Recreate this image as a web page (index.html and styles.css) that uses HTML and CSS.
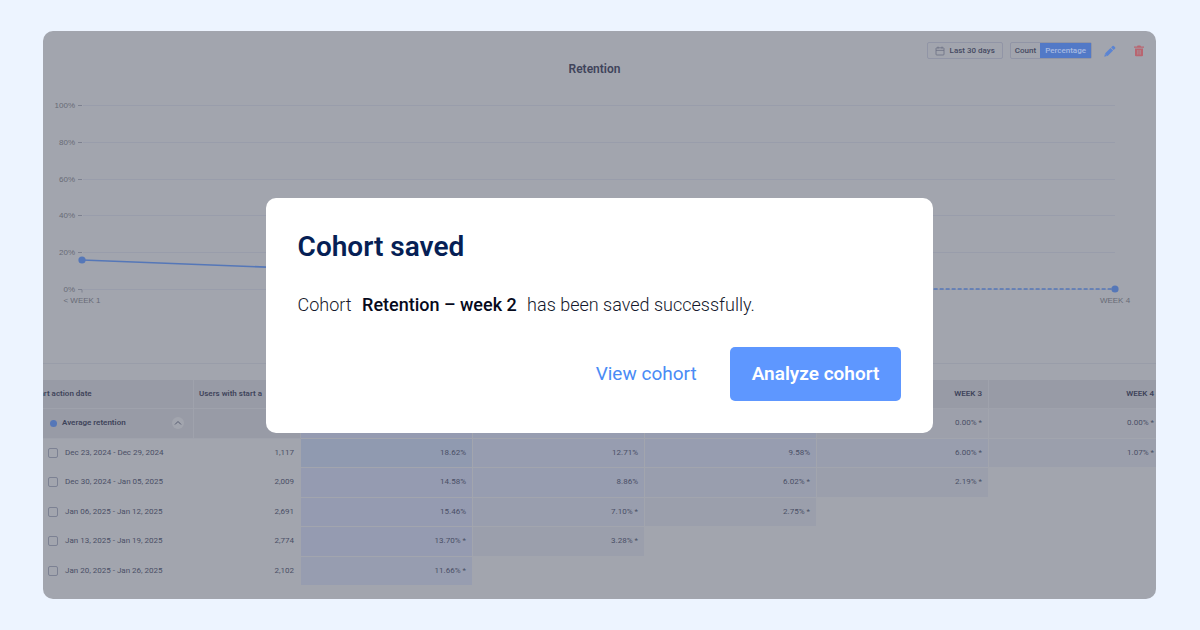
FILE: index.html
```html
<!DOCTYPE html>
<html lang="en">

<head>
    <meta charset="UTF-8" />
    <title>Retention</title>
    <link rel="stylesheet" href="styles.css">
</head>

<body>
    <main class="panel">
        <div class="toolbar">
            <button class="btn-date" type="button">
                <svg width="10" height="10" viewBox="0 0 10 10" fill="none" stroke="#6b7083" stroke-width="0.8">
                    <rect x="1" y="1.8" width="8" height="7.2" rx="0.8" />
                    <path d="M1 4.4h8M3 0.6v2M7 0.6v2" />
                </svg>
                Last 30 days
            </button>
            <div class="switch">
                <button type="button">Count</button>
                <button class="active" type="button">Percentage</button>
            </div>
            <button class="btn-icon" type="button" aria-label="Edit">
                <svg width="12" height="12" viewBox="0 0 12 12" fill="#5b84d2">
                    <path d="M0.3 11.7l0.6-2.6 2 2z" />
                    <path d="M1.3 8.2l5.2-5.2 2.6 2.6-5.2 5.2q-0.8 0.4-1.4-0.2l-1-1q-0.6-0.6-0.2-1.4z" />
                    <path d="M7.1 2.4l1.4-1.4q0.7-0.7 1.4 0l1.2 1.2q0.7 0.7 0 1.4l-1.4 1.4z" />
                </svg>
            </button>
            <button class="btn-icon" type="button" aria-label="Delete">
                <svg width="10" height="12" viewBox="0 0 10 12">
                    <path fill="#b96570" d="M0 1.4h3l0.6-0.9h2.8l0.6 0.9h3v1.3h-10z" />
                    <path fill="#b96570" d="M1 3.4h8v6.8q0 1.1-1.1 1.1h-5.8q-1.1 0-1.1-1.1z" />
                    <path stroke="#a2a5ae" stroke-width="0.5" d="M3.6 5v4.6M5 5v4.6M6.4 5v4.6" />
                </svg>
            </button>
        </div>
        <h1>Retention</h1>

        <svg class="chart" viewBox="0 0 1113 284">
            <g class="grid">
                <path d="M40 26.5H1072M40 63.5H1072M40 100.5H1072M40 136.5H1072M40 173.5H1072M40 210.5H1072" />
            </g>
            <g class="ticks">
                <path d="M35 26.5h4M35 63.5h4M35 100.5h4M35 136.5h4M35 173.5h4M35 210.5h4v3" />
            </g>
            <g class="axis" text-anchor="end">
                <text x="32" y="29">100%</text>
                <text x="32" y="66">80%</text>
                <text x="32" y="103">60%</text>
                <text x="32" y="139">40%</text>
                <text x="32" y="176">20%</text>
                <text x="32" y="213">0%</text>
            </g>
            <g class="axis" text-anchor="middle">
                <text x="39" y="224">&lt; WEEK 1</text>
                <text x="1072" y="224">WEEK 4</text>
            </g>
            <path class="line" d="M39 181L297 191" />
            <path class="line dashed" d="M297 191L555 200L814 210H1072" />
            <circle cx="39" cy="181" r="3.6" />
            <circle cx="1072" cy="210" r="3.6" />
        </svg>

        <div class="table-wrap">
            <table>
                <colgroup>
                    <col class="col-date">
                    <col class="col-users">
                    <col span="5">
                </colgroup>
                <thead>
                    <tr>
                        <th class="date">Start action date</th>
                        <th class="users">Users with start a</th>
                        <th></th>
                        <th></th>
                        <th></th>
                        <th>WEEK 3</th>
                        <th>WEEK 4</th>
                    </tr>
                </thead>
                <tbody>
                    <tr>
                        <th>
                            <div class="avg">
                                <span class="dot"></span>
                                Average retention
                                <button type="button" aria-label="Collapse">
                                    <svg width="12" height="12" viewBox="0 0 12 12" fill="none" stroke="#555b70">
                                        <path d="M3 7.5l3-3 3 3" />
                                    </svg>
                                </button>
                            </div>
                        </th>
                        <th></th>
                        <td class="l4"></td>
                        <td class="l3"></td>
                        <td class="l3"></td>
                        <td class="l0">0.00% *</td>
                        <td class="l0">0.00% *</td>
                    </tr>
                    <tr>
                        <td><label><input type="checkbox">Dec 23, 2024 - Dec 29, 2024</label></td>
                        <td>1,117</td>
                        <td class="l5">18.62%</td>
                        <td class="l3">12.71%</td>
                        <td class="l3">9.58%</td>
                        <td class="l2">6.00% *</td>
                        <td class="l1">1.07% *</td>
                    </tr>
                    <tr>
                        <td><label><input type="checkbox">Dec 30, 2024 - Jan 05, 2025</label></td>
                        <td>2,009</td>
                        <td class="l4">14.58%</td>
                        <td class="l3">8.86%</td>
                        <td class="l2">6.02% *</td>
                        <td class="l1">2.19% *</td>
                        <td></td>
                    </tr>
                    <tr>
                        <td><label><input type="checkbox">Jan 06, 2025 - Jan 12, 2025</label></td>
                        <td>2,691</td>
                        <td class="l4">15.46%</td>
                        <td class="l2">7.10% *</td>
                        <td class="l1">2.75% *</td>
                        <td></td>
                        <td></td>
                    </tr>
                    <tr>
                        <td><label><input type="checkbox">Jan 13, 2025 - Jan 19, 2025</label></td>
                        <td>2,774</td>
                        <td class="l4">13.70% *</td>
                        <td class="l1">3.28% *</td>
                        <td></td>
                        <td></td>
                        <td></td>
                    </tr>
                    <tr>
                        <td><label><input type="checkbox">Jan 20, 2025 - Jan 26, 2025</label></td>
                        <td>2,102</td>
                        <td class="l3">11.66% *</td>
                        <td></td>
                        <td></td>
                        <td></td>
                        <td></td>
                    </tr>
                </tbody>
            </table>
        </div>

        <div class="overlay">
            <div class="modal" role="dialog" aria-labelledby="modal-title">
                <h2 id="modal-title">Cohort saved</h2>
                <p>Cohort <strong>Retention – week 2</strong> has been saved successfully.</p>
                <div class="modal-actions">
                    <a href="#">View cohort</a>
                    <button type="button">Analyze cohort</button>
                </div>
            </div>
        </div>
    </main>
</body>

</html>
```

FILE: styles.css
```css
* {
    box-sizing: border-box;
}

body {
    margin: 0;
    padding: 31px 44px 31px 43px;
    min-height: 100vh;
    background: #edf4ff;
    font-family: Roboto, sans-serif;
    color: #4a4f66;
}

button {
    font-family: inherit;
    cursor: pointer;
}

.panel {
    position: relative;
    min-height: 568px;
    background: #a2a5ae;
    border-radius: 10px;
    overflow: hidden;
}

/* toolbar */
.toolbar {
    display: flex;
    justify-content: flex-end;
    align-items: center;
    height: 28px;
    padding: 11px 12px 0 0;
}

.toolbar button {
    height: 17px;
    padding: 0;
    border: none;
    background: none;
    color: #454a62;
    font-size: 8px;
    font-weight: 500;
}

.toolbar .btn-date {
    display: flex;
    align-items: center;
    gap: 5px;
    padding: 0 7px;
    border: 1px solid #9195a6;
    border-radius: 2px;
}

.switch {
    display: flex;
    margin: 0 12px 0 7px;
    border: 1px solid #9195a6;
    border-radius: 2px;
    height: 17px;
}

.switch button {
    height: 15px;
    padding: 0 4px;
}

.switch .active {
    padding: 0 5px;
    background: #5279c7;
    color: #a9bbe2;
}

.toolbar .btn-icon {
    display: flex;
    align-items: center;
}

.btn-icon + .btn-icon {
    margin-left: 18px;
}

h1 {
    margin: 0;
    padding-right: 10px;
    text-align: center;
    color: #3f445b;
    font-size: 12px;
    font-weight: 600;
    line-height: 20px;
}

/* chart */
.chart {
    display: block;
    width: 100%;
    border-bottom: 1px solid #999da9;
}

.grid path {
    stroke: #999dab;
}

.ticks path {
    fill: none;
    stroke: #7d8190;
}

.axis text {
    fill: #686b76;
    font-family: "Liberation Sans", Arial, sans-serif;
    font-size: 8px;
}

.line {
    fill: none;
    stroke: #5577b8;
    stroke-width: 1.6;
}

.dashed {
    stroke-dasharray: 4 2;
}

.chart circle {
    fill: #5577b8;
}

/* table */
.table-wrap {
    overflow: hidden;
    padding: 16px 0 13px;
}

table {
    width: calc(100% + 21px);
    height: 206px;
    margin-left: -16px;
    table-layout: fixed;
    border-collapse: separate;
    border-spacing: 0;
    font-size: 8px;
    line-height: 12px;
}

tr {
    height: 29px;
}

.col-date {
    width: 167px;
}

.col-users {
    width: 107px;
}

th,
td {
    padding: 0 6px 0 0;
    border: solid #a2a5ae;
    border-width: 0 1px 1px 0;
    text-align: right;
    white-space: nowrap;
}

th {
    background: #989ba6;
    border-color: #9fa2ac;
    color: #3f445b;
    font-weight: 600;
}

td:first-child,
th:first-child {
    text-align: left;
    padding-left: 21px;
}

th.date {
    padding-left: 5px;
}

th.users {
    text-align: left;
    padding-left: 5px;
}

.l0 { background: #9da0ab; }
.l1 { background: #9b9fac; }
.l2 { background: #999eae; }
.l3 { background: #979db0; }
.l4 { background: #959bb1; }
.l5 { background: #909ab0; }

.avg {
    display: flex;
    align-items: center;
}

.dot {
    width: 7px;
    height: 7px;
    margin: 0 5px 0 2px;
    border-radius: 50%;
    background: #5577b8;
}

.avg button {
    display: flex;
    margin-left: auto;
    margin-right: 3px;
    padding: 0;
    border: none;
    border-radius: 50%;
    background: #a2a5ae;
}

td label {
    display: flex;
    align-items: center;
    gap: 7px;
}

td input {
    appearance: none;
    width: 10px;
    height: 10px;
    margin: 0;
    border: 1px solid #7c8193;
    border-radius: 2px;
}

/* modal */
.overlay {
    position: absolute;
    inset: 0;
    display: flex;
    justify-content: center;
    align-items: center;
}

.modal {
    width: 60%;
    padding: 32px;
    border-radius: 10px;
    background: #fff;
}

.modal h2 {
    margin: 0;
    color: #061f55;
    font-size: 28px;
    font-weight: 600;
    line-height: 34px;
}

.modal p {
    margin: 27px 0 28px;
    color: #14182b;
    font-size: 18px;
    font-weight: 300;
    line-height: 28px;
}

.modal strong {
    margin: 0 6px;
    color: #060a1c;
    font-weight: 500;
}

.modal-actions {
    display: flex;
    justify-content: flex-end;
    align-items: center;
    gap: 33px;
    font-size: 19px;
}

.modal-actions a {
    color: #4a8bf5;
    text-decoration: none;
}

.modal-actions button {
    height: 54px;
    padding: 0 22px;
    border: none;
    border-radius: 5px;
    background: #5e97ff;
    color: #fff;
    font-size: 19px;
    font-weight: 600;
}
```
